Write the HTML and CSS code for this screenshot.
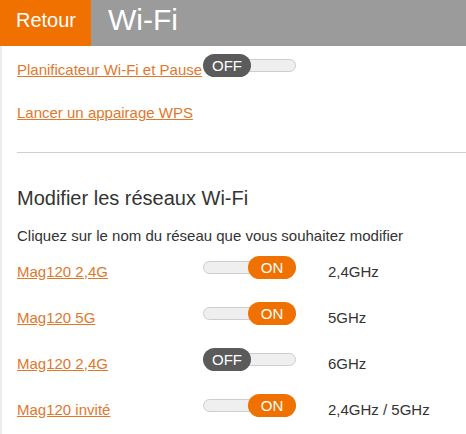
FILE: index.html
```html
<!DOCTYPE html>
<html lang="fr">
<head>
<meta charset="utf-8">
<title>Wi-Fi</title>
<link rel="stylesheet" href="styles.css">
</head>
<body>
<div class="page">
  <header class="header">
    <a class="back">Retour</a>
    <h1 class="title">Wi-Fi</h1>
  </header>
  <main class="content">
    <div class="row row-first">
      <a class="link link-col" href="#">Planificateur Wi-Fi et Pause</a>
      <span class="toggle off"><span class="knob">OFF</span></span>
    </div>
    <p class="line wps"><a class="link" href="#">Lancer un appairage WPS</a></p>
    <hr class="sep">
    <h2 class="heading">Modifier les réseaux Wi-Fi</h2>
    <p class="line hint">Cliquez sur le nom du réseau que vous souhaitez modifier</p>
    <div class="row">
      <a class="link link-col" href="#">Mag120 2,4G</a>
      <span class="toggle on"><span class="knob">ON</span></span>
      <span class="freq">2,4GHz</span>
    </div>
    <div class="row">
      <a class="link link-col" href="#">Mag120 5G</a>
      <span class="toggle on"><span class="knob">ON</span></span>
      <span class="freq">5GHz</span>
    </div>
    <div class="row">
      <a class="link link-col" href="#">Mag120 2,4G</a>
      <span class="toggle off"><span class="knob">OFF</span></span>
      <span class="freq">6GHz</span>
    </div>
    <div class="row">
      <a class="link link-col" href="#">Mag120 invité</a>
      <span class="toggle on"><span class="knob">ON</span></span>
      <span class="freq">2,4GHz / 5GHz</span>
    </div>
  </main>
</div>
</body>
</html>
```
FILE: styles.css
```css
html, body {
  margin: 0;
  padding: 0;
  background: #fff;
}
body {
  font-family: "Liberation Sans", Arial, sans-serif;
  color: #333;
  overflow: hidden;
}
.page {
  width: 466px;
  height: 434px;
  border-left: 2px solid #ececec;
  box-sizing: border-box;
}
.header {
  display: flex;
  height: 46px;
  background: #9b9b9b;
  margin-left: -2px;
}
.back {
  width: 91px;
  box-sizing: border-box;
  background: #f07000;
  color: #fff;
  font-size: 20px;
  line-height: 23px;
  padding: 9px 0 0 16px;
}
.title {
  margin: 0 0 0 17px;
  color: #fff;
  font-weight: normal;
  font-size: 30px;
  line-height: 30px;
  padding-top: 5px;
}
.content {
  padding-left: 15px;
}
.link {
  color: #e0782c;
  text-decoration: underline;
  font-size: 15px;
  line-height: 17px;
  white-space: nowrap;
}
.link-col {
  width: 186px;
  flex: none;
}
.row {
  display: flex;
  align-items: center;
  height: 46px;
  font-size: 15px;
}
.line {
  margin: 0;
  font-size: 15px;
  line-height: 17px;
}
.wps {
  margin-top: 12px;
}
.sep {
  border: 0;
  border-top: 1px solid #cfcfcf;
  margin: 31px 0 0 0;
  height: 0;
}
.heading {
  margin: 33px 0 0 0;
  font-size: 20px;
  line-height: 24px;
  font-weight: normal;
  color: #333;
}
.hint {
  margin-top: 17px;
  margin-bottom: 4px;
}
.toggle {
  display: flex;
  align-items: center;
  width: 93px;
  height: 13px;
  box-sizing: border-box;
  background: #efefef;
  border: 1px solid #cdcdcd;
  border-radius: 7px;
  margin-bottom: 8px;
  flex: none;
}
.toggle.on {
  justify-content: flex-end;
}
.knob {
  width: 48px;
  height: 23px;
  flex: none;
  border-radius: 12px;
  color: #fff;
  font-size: 15px;
  line-height: 23px;
  text-align: center;
  margin: 0 -1px;
}
.on .knob {
  background: #f07000;
}
.off .knob {
  background: #5b5b5b;
}
.freq {
  margin-left: 32px;
  font-size: 15px;
  color: #333;
}
```
